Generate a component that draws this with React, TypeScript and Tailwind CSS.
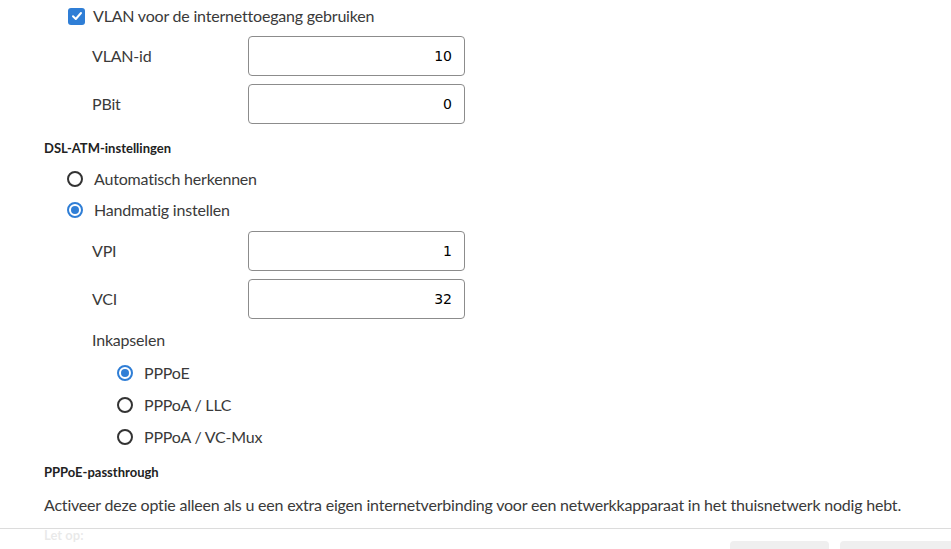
import React from "react";

const font = { fontFamily: "Lato, 'Noto Sans', sans-serif" };

function Checkbox() {
  return (
    <span className="flex h-[17px] w-[17px] items-center justify-center rounded-[3px] bg-[#2f7ed6]">
      <svg width="12" height="12" viewBox="0 0 12 12" fill="none">
        <path d="M2 6.2 4.8 9 10 3" stroke="#fff" strokeWidth="2" strokeLinecap="round" strokeLinejoin="round" />
      </svg>
    </span>
  );
}

function Radio({ checked }: { checked?: boolean }) {
  return checked ? (
    <span className="flex h-4 w-4 items-center justify-center rounded-full border-2 border-[#2f7ed6]">
      <span className="h-2 w-2 rounded-full bg-[#2f7ed6]" />
    </span>
  ) : (
    <span className="h-4 w-4 rounded-full border-2 border-[#333]" />
  );
}

function Field({ label, value, className = "" }: { label: string; value: string; className?: string }) {
  return (
    <div className={"flex h-10 items-center pl-[48px] " + className}>
      <span className="w-[156px]">{label}</span>
      <div className="flex h-10 w-[217px] items-center justify-end rounded-[4px] border border-[#8c8c8c] bg-white pr-[12px] text-[14px] tracking-normal text-black" style={{ fontFamily: "'DejaVu Sans', sans-serif" }}>
        {value}
      </div>
    </div>
  );
}

function RadioRow({ label, checked, indent, h }: { label: string; checked?: boolean; indent: string; h: string }) {
  return (
    <div className={"flex items-center gap-[11px] " + indent + " " + h}>
      <Radio checked={checked} />
      <span>{label}</span>
    </div>
  );
}

export default function App() {
  return (
    <div className="relative h-[549px] overflow-hidden bg-white pl-[44px] text-[16px] tracking-[-0.2px] text-[#3a3a3a]" style={font}>
      <div className="mt-[4px] flex h-6 items-center gap-[8px] pl-[24px]">
        <Checkbox />
        <span>VLAN voor de internettoegang gebruiken</span>
      </div>
      <Field label="VLAN-id" value="10" className="mt-[8px]" />
      <Field label="PBit" value="0" className="mt-[8px]" />

      <div className="mt-[15px] flex h-5 items-center text-[13px] font-bold tracking-normal text-[#222]">DSL-ATM-instellingen</div>
      <div className="mt-[4px]">
        <RadioRow label="Automatisch herkennen" indent="pl-[23px]" h="h-[31px]" />
        <RadioRow label="Handmatig instellen" checked indent="pl-[23px]" h="h-[31px]" />
      </div>
      <Field label="VPI" value="1" className="mt-[6px]" />
      <Field label="VCI" value="32" className="mt-[8px]" />

      <div className="mt-[6px] flex h-[30px] items-center pl-[48px]">Inkapselen</div>
      <div className="mt-[2px]">
        <RadioRow label="PPPoE" checked indent="pl-[73px]" h="h-8" />
        <RadioRow label="PPPoA / LLC" indent="pl-[73px]" h="h-8" />
        <RadioRow label="PPPoA / VC-Mux" indent="pl-[73px]" h="h-8" />
      </div>

      <div className="mt-[10px] flex h-5 items-center text-[13px] font-bold tracking-normal text-[#222]">PPPoE-passthrough</div>
      <p className="mt-[10px] flex h-6 items-center">
        Activeer deze optie alleen als u een extra eigen internetverbinding voor een netwerkkapparaat in het thuisnetwerk nodig hebt.
      </p>
      <div className="mt-[9px] flex h-5 items-center text-[13px] font-bold tracking-normal text-[#222]">Let op:</div>

      <div className="absolute bottom-0 left-0 right-0 h-[21px] border-t border-[#dcdcdc] bg-white/90">
        <div className="mt-[12px] flex justify-end gap-[11px]">
          <div className="h-8 w-[99px] rounded-[4px] bg-[#efefef]" />
          <div className="-mr-[12px] h-8 w-[123px] rounded-[4px] bg-[#efefef]" />
        </div>
      </div>
    </div>
  );
}
